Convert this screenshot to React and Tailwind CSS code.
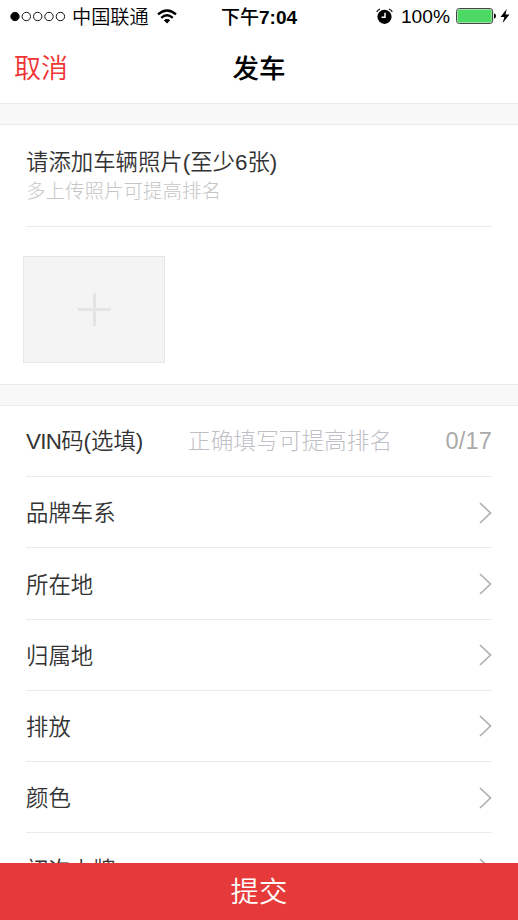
const rows = ["品牌车系", "所在地", "归属地", "排放", "颜色", "初次上牌"];

function Chevron() {
  return (
    <svg className="mt-[1px] h-[22px] w-[14px] text-[#b0b0b0]" viewBox="0 0 14 22" fill="none" stroke="currentColor" strokeWidth="1.7">
      <path d="M2 1 12.5 11 2 21" />
    </svg>
  );
}

function StatusBar() {
  return (
    <div className="grid h-[33px] grid-cols-[1fr_auto_1fr] items-center text-[19px] leading-none text-black">
      <div className="flex items-center pl-[10px]">
        <svg className="h-[11px] w-[56px]" viewBox="0 0 56 11" fill="none" stroke="#111" strokeWidth="1">
          <circle cx="5" cy="5.5" r="4.2" fill="#000" />
          <circle cx="16.3" cy="5.5" r="4.2" />
          <circle cx="27.7" cy="5.5" r="4.2" />
          <circle cx="39" cy="5.5" r="4.2" />
          <circle cx="50.4" cy="5.5" r="4.2" />
        </svg>
        <span className="mt-[2px] ml-[6px] text-[19.2px] font-[350] whitespace-nowrap">中国联通</span>
        <svg className="ml-[8px] h-[15px] w-[20px]" viewBox="0 0 20 15" fill="none" stroke="#000" strokeWidth="2.3">
          <path d="M1 5.4Q10-2.4 19 5.4" />
          <path d="M4.2 8.8Q10 3.8 15.8 8.8" />
          <path d="M10 14.5 6.8 11.2Q10 8.8 13.2 11.2Z" fill="#000" stroke="none" />
        </svg>
      </div>
      <span className="mt-[1px] font-bold whitespace-nowrap"><span className="font-medium">下午</span>7:04</span>
      <div className="flex items-center justify-end pr-[8px]">
        <svg className="mr-[-1px] h-[17px] w-[17px]" viewBox="0 0 17 17" fill="none">
          <circle cx="8.5" cy="8.8" r="7.1" fill="#000" />
          <path d="M.7 4Q1.7 1.6 4 1M16.3 4Q15.3 1.6 13 1" stroke="#000" strokeWidth="1.1" />
          <path d="M9 4.8V9.3H5.5" stroke="#fff" strokeWidth="1.5" />
        </svg>
        <span className="mt-[1px] ml-[9px] text-[19.2px]">100%</span>
        <svg className="ml-[6px] h-[16px] w-[41px]" viewBox="0 0 41 16" fill="none">
          <rect x="0.6" y="0.6" width="36" height="14.8" rx="2.6" stroke="#333" strokeWidth="1" />
          <rect x="1.5" y="1.5" width="34.2" height="13" rx="1.6" fill="#4cd964" />
          <path d="M38 5.2Q40 6 40 8T38 10.8Z" fill="#000" />
        </svg>
        <svg className="ml-[3px] h-[14px] w-[10px]" viewBox="0 0 10 14">
          <path d="M6.7 0 .5 8h3.8L2.7 14 9.5 5.6H5.5Z" fill="#000" />
        </svg>
      </div>
    </div>
  );
}

export default function App() {
  return (
    <div className="flex h-[920px] w-[518px] flex-col overflow-hidden bg-white font-['Liberation_Sans','Noto_Sans_CJK_SC',sans-serif] text-[22.4px] leading-none text-[#333]">
      <StatusBar />
      <header className="grid h-[70px] shrink-0 grid-cols-[1fr_auto_1fr] items-center px-[14px] pt-[3px]">
        <span className="text-[27px] font-[350] text-[#f03434]">取消</span>
        <h1 className="text-[26.5px] font-medium text-black">发车</h1>
      </header>
      <div className="h-[22px] shrink-0 border-y border-[#ebebeb] bg-[#f8f8f8]" />

      <section className="h-[259px] shrink-0">
        <div className="mx-[26px] flex h-[102px] flex-col border-b border-[#ebebeb] pt-[26px]">
          <h2 className="text-[22.4px] leading-[24px] font-[350]">请添加车辆照片(至少6张)</h2>
          <p className="mt-[6px] text-[19.5px] leading-[20px] font-light text-[#c6c6c6]">多上传照片可提高排名</p>
        </div>
        <button className="mt-[29px] ml-[23px] flex h-[107px] w-[142px] items-center justify-center border border-[#e6e6e6] bg-[#f4f4f4]">
          <svg className="h-[33px] w-[33px]" viewBox="0 0 33 33" stroke="#e4e4e4" strokeWidth="3">
            <path d="M16.5 0V33M0 16.5H33" />
          </svg>
        </button>
      </section>
      <div className="h-[22px] shrink-0 border-y border-[#ebebeb] bg-[#f8f8f8]" />

      <main className="min-h-0 flex-1 overflow-hidden px-[26px]">
        <div className="flex h-[71px] items-center border-b border-[#ebebeb] pt-[2px] font-[350]">
          <span className="w-[162px]"><span className="tracking-[-0.7px]">VIN</span>码(选填)</span>
          <span className="flex-1 pb-[1px] text-[22.7px] font-light text-[#bfbfc8]">正确填写可提高排名</span>
          <span className="text-[23.5px] tracking-[0.2px] text-[#aaa]">0/17</span>
        </div>
        {rows.map((label) => (
          <div key={label} className="flex h-[71.25px] items-center justify-between border-b border-[#ebebeb] font-[350]">
            <span className="pt-[5px]">{label}</span>
            <Chevron />
          </div>
        ))}
      </main>

      <button className="h-[57.5px] shrink-0 bg-[#e63a3a] pt-[2px] text-[28.4px] font-[350] text-white">提交</button>
    </div>
  );
}
